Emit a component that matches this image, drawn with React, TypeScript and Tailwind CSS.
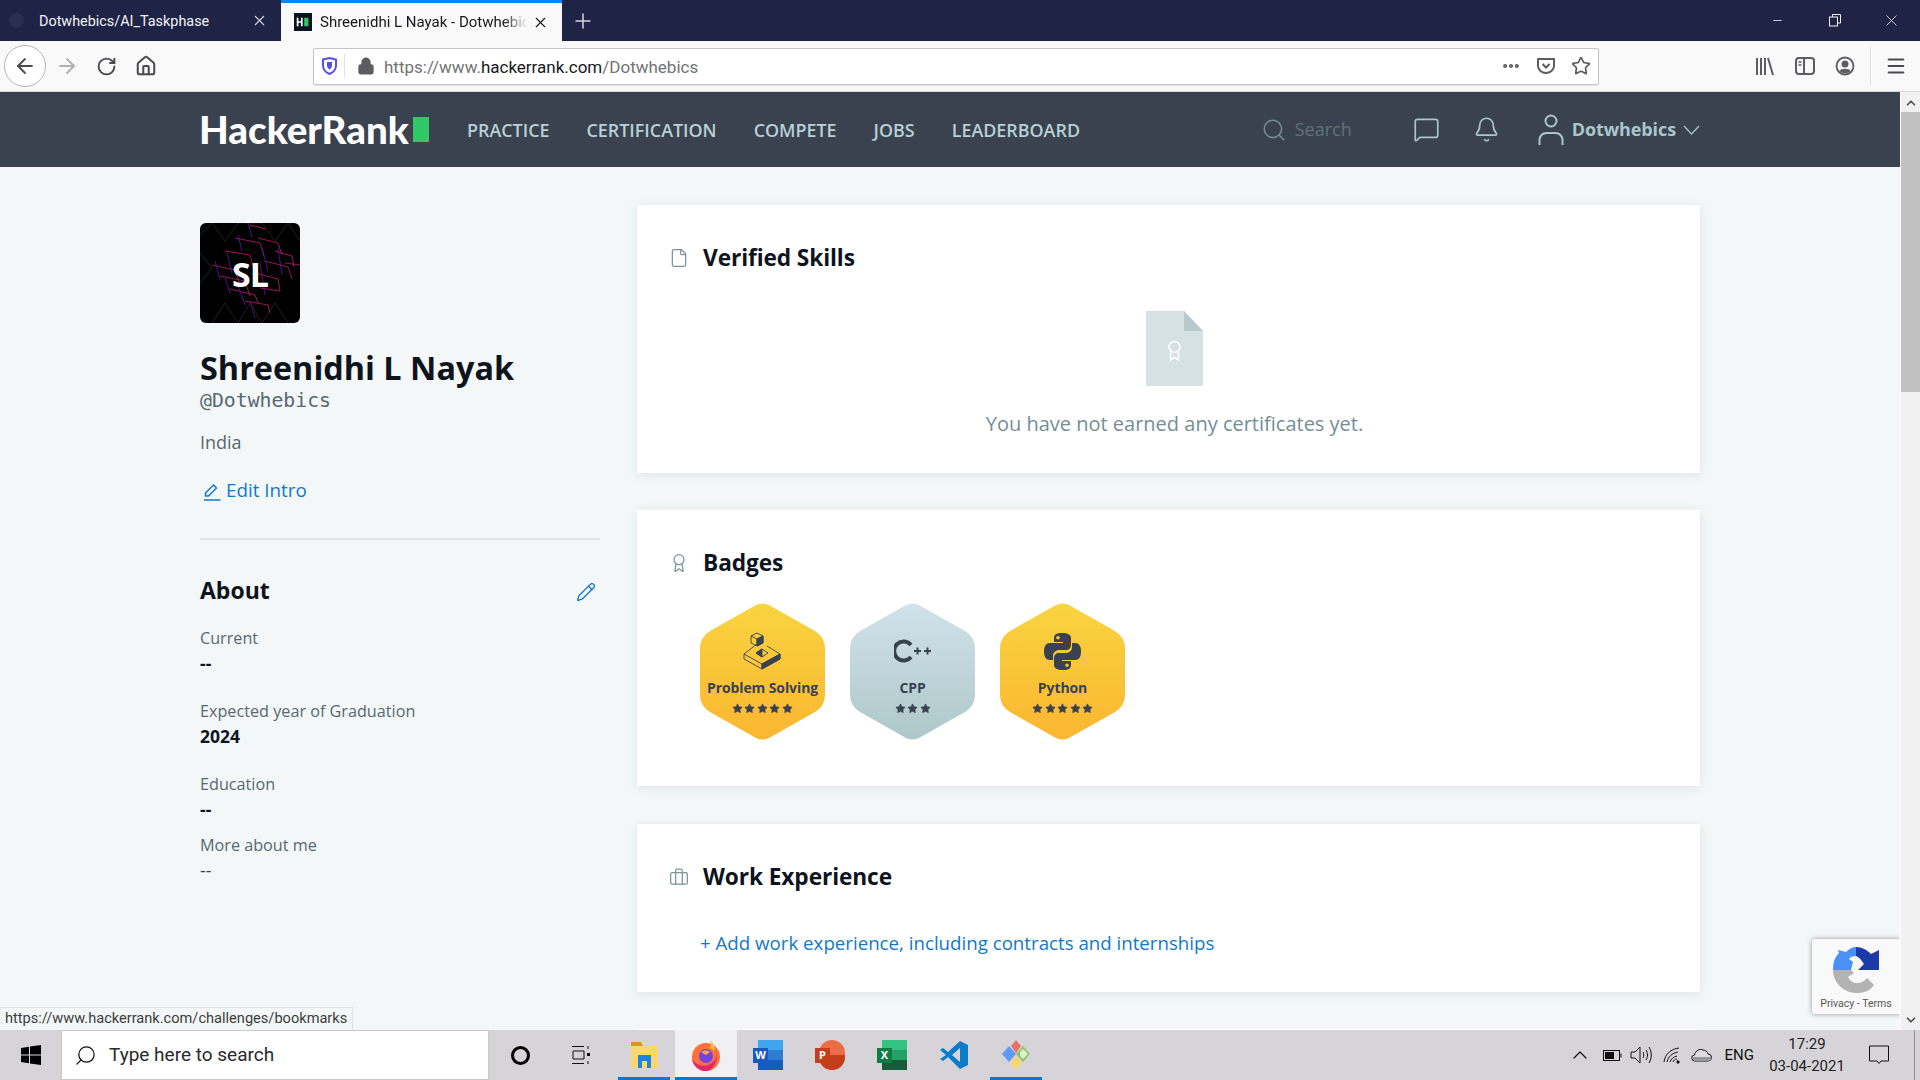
import { ReactNode } from "react";
import { RotateCw, Home, ArrowLeft, ArrowRight, Lock, X, Plus, Star, MoreHorizontal, Search, Bell, ChevronDown, ChevronUp, Menu, Pencil, File, Award, Briefcase, MessageSquare, Minus } from "lucide-react";

const SITE = "font-['Open_Sans',sans-serif]";

function HrMark({ size = 18 }: { size?: number }) {
    return (
        <svg width={size} height={size} viewBox="0 0 15 15" className="shrink-0">
            <rect width="15" height="15" fill="#0e141e" />
            <path d="M3 4v7M6.500 4v7M3 7.500h3.500" stroke="#fff" strokeWidth="1.400" />
            <rect x="8.500" y="4" width="3.500" height="7" fill="#2ec866" />
        </svg>
    );
}

function BrowserTabs() {
    return (
        <div className="h-[41px] bg-[#1f2447] flex font-['Roboto',sans-serif] text-[14.400px] shrink-0">
            <div className="w-[281px] flex items-center pl-[9px] pr-[13px] text-[#f3f3f5] shrink-0">
                <svg width="15" height="15" viewBox="0 0 16 16" className="mr-[15px] shrink-0" fill="#2a2f52">
                    <circle cx="8" cy="8" r="8" />
                </svg>
                <span className="whitespace-nowrap mt-[2px]">Dotwhebics/AI_Taskphase</span>
                <X size={17} strokeWidth={1.500} className="ml-auto text-[#d5d6de] shrink-0" />
            </div>
            <div className="w-[281px] bg-[#f9f9fa] border-t-[3px] border-[#0a84ff] flex items-center pl-[13px] pr-[13px] text-[#18181a] shrink-0">
                <HrMark />
                <span className="ml-[8px] w-[208px] overflow-hidden whitespace-nowrap text-[15px] [mask-image:linear-gradient(to_right,black_88%,transparent)]">Shreenidhi L Nayak - Dotwhebics</span>
                <X size={17} strokeWidth={1.500} className="ml-auto shrink-0" />
            </div>
            <div className="w-[42px] flex items-center justify-center text-[#d5d6de] shrink-0">
                <Plus size={24} strokeWidth={1.500} />
            </div>
            <div className="ml-auto flex items-center text-[#eef0f5] shrink-0">
                <div className="w-[57px] flex justify-center"><Minus size={13} strokeWidth={1.500} /></div>
                <div className="w-[57px] flex justify-center">
                    <svg width="12" height="13" viewBox="0 0 12 13" fill="none" stroke="currentColor">
                        <path d="M3.500 3V.5h8V9H9" /><rect x=".5" y="3" width="8" height="9" />
                    </svg>
                </div>
                <div className="w-[57px] flex justify-center"><X size={19} strokeWidth={1} /></div>
            </div>
        </div>
    );
}

function BrowserToolbar() {
    return (
        <div className="h-[51px] bg-[#f9f9fa] border-b border-[#d6d6d7] flex items-center shrink-0 text-[#4a4a4f]">
            <div className="ml-[4px] w-[42px] h-[42px] rounded-full border border-[#b4b4b4] bg-white flex items-center justify-center shrink-0">
                <ArrowLeft size={24} strokeWidth={1.800} />
            </div>
            <ArrowRight size={24} strokeWidth={1.800} className="ml-[9px] text-[#b1b1b3] shrink-0" />
            <RotateCw size={21} strokeWidth={2.200} className="ml-[17px] shrink-0" />
            <Home size={22} strokeWidth={2.200} className="ml-[18px] shrink-0" />
            <div className="ml-[156px] w-[1286px] h-[37px] bg-white border border-[#c4c4c4] rounded-[2px] flex items-center shrink-0 shadow-[0_1px_1px_rgba(0,0,0,0.08)]">
                <svg width="15" height="18" viewBox="0 0 15 18" className="ml-[8px] shrink-0">
                    <path d="M1 2.500 7.500 1 14 2.500v6c0 4-3 7-6.500 8.500C4 15.500 1 12.500 1 8.500z" fill="#fff" stroke="#5b4fe0" strokeWidth="2" />
                    <path d="M5 5h5v3.500c0 2-1.200 3.200-2.500 4C6.200 11.700 5 10.500 5 8.500z" fill="#5b4fe0" />
                </svg>
                <div className="w-px h-[24px] bg-[#e2e2e3] ml-[7px]" />
                <Lock size={18} strokeWidth={2.400} fill="#5c5c61" className="ml-[12px] text-[#5c5c61] shrink-0" />
                <span className="ml-[9px] mt-[3px] font-['Roboto',sans-serif] text-[17px] text-[#737373] whitespace-nowrap">
                    https://www.<span className="text-[#18181a]">hackerrank.com</span>/Dotwhebics
                </span>
                <MoreHorizontal size={20} strokeWidth={3} className="ml-auto text-[#5c5c61]" />
                <svg width="20" height="20" viewBox="0 0 20 20" fill="none" stroke="#5c5c61" strokeWidth="2" className="ml-[15px]">
                    <path d="M2 3h16v7c0 4-4 7-8 7s-8-3-8-7z" strokeLinejoin="round" /><path d="m6.500 8 3.500 3.500L13.500 8" />
                </svg>
                <Star size={20} strokeWidth={2} className="ml-[15px] mr-[7px] text-[#5c5c61]" />
            </div>
            <div className="ml-auto flex items-center shrink-0">
                <svg width="20" height="20" viewBox="0 0 20 20" fill="none" stroke="#5c5c61" strokeWidth="2"><path d="M2 2v17M6 2v17M10 2v17M13 2l5 17" /></svg>
                <svg width="20" height="20" viewBox="0 0 20 20" fill="none" stroke="#5c5c61" strokeWidth="2" className="ml-[20px]"><rect x="1" y="2" width="18" height="16" rx="3" /><path d="M9 2v16" /><path d="M3.500 6h3M3.500 9h3" strokeWidth="1.400" /></svg>
                <svg width="20" height="20" viewBox="0 0 20 20" className="ml-[20px]"><circle cx="10" cy="10" r="8.500" fill="none" stroke="#5c5c61" strokeWidth="1.800" /><circle cx="10" cy="8" r="3.500" fill="#5c5c61" /><path d="M4.500 15c1-3 10-3 11 0-3 3-8 3-11 0z" fill="#5c5c61" /></svg>
                <div className="w-px h-[38px] bg-[#e0e0e1] ml-[15px]" />
                <Menu size={22} strokeWidth={2.200} className="ml-[14px] mr-[13px]" />
            </div>
        </div>
    );
}

function SiteNav() {
    const links = ["PRACTICE", "CERTIFICATION", "COMPETE", "JOBS", "LEADERBOARD"];
    return (
        <div className={`h-[75px] bg-[#39424e] pl-[200px] pr-[200px] flex items-center shrink-0 ${SITE}`}>
            <div className="flex items-center font-['Lato',sans-serif] text-[38.500px] font-black text-white w-[230px] shrink-0 -ml-[1px]">
                HackerRank
                <span className="w-[18px] h-[25px] bg-[#2ec866] ml-[4px]" />
            </div>
            <div className="flex items-center ml-[38px] gap-[37px] text-[#b8d0d6] text-[17.900px] font-semibold mt-[1px]">
                {links.map((link) => (
                    <span key={link}>{link}</span>
                ))}
            </div>
            <div className="ml-auto flex items-center text-[#a9c6cd]">
                <Search size={26} strokeWidth={1.400} className="text-[#738f93]" />
                <span className="ml-[8px] text-[18px] text-[#5f7277] w-[118px]">Search</span>
                <MessageSquare size={27} strokeWidth={1.500} />
                <Bell size={27} strokeWidth={1.500} className="ml-[33px]" />
                <svg width="26" height="32" viewBox="0 0 26 32" fill="none" stroke="currentColor" strokeWidth="2" className="ml-[38px]">
                    <circle cx="13" cy="7" r="5.500" />
                    <path d="M1.500 31v-5c0-4 3-7 7-7h9c4 0 7 3 7 7v5" />
                </svg>
                <span className="ml-[8px] text-[18px] font-bold tracking-[-0.1px]">Dotwhebics</span>
                <svg width="17" height="10" viewBox="0 0 17 10" fill="none" stroke="currentColor" strokeWidth="1.200" className="ml-[7px]">
                    <path d="M1 1l7.500 8L16 1" />
                </svg>
            </div>
        </div>
    );
}

function AboutRow({ label, value, bold = true, className = "" }: { label: string; value: string; bold?: boolean; className?: string }) {
    return (
        <div className={className}>
            <div className="text-[16.200px] leading-[24px] text-[#576871]">{label}</div>
            <div className={`text-[17.500px] leading-[24px] mt-[1px] ${bold ? "font-bold text-[#0e141e]" : "text-[#39424e]"}`}>{value}</div>
        </div>
    );
}

function Sidebar() {
    return (
        <div className={`w-[400px] shrink-0 pt-[56px] ${SITE}`}>
            <div className="w-[100px] h-[100px] rounded-[6px] bg-black relative overflow-hidden flex items-center justify-center">
                <svg width="100" height="100" viewBox="0 0 100 100" className="absolute inset-0" fill="none" strokeWidth="0.800">
                    <path d="M0 30 12 45 0 60M12 100 25 80 38 100 50 80 62 100 75 80 88 100M0 12 12 0 25 18 38 0 62 0 75 18 88 0 100 18" stroke="#2a2a2a" />
                    <path d="M35 15 60 20 64 33M25 28 50 32 54 47M12 42 35 47 40 62M50 2 66 6M58 15 78 20 82 32M75 28 92 33 94 44M65 38 88 44 92 56M85 40 100 42M20 53 45 58 50 73M55 50 78 56 80 68M30 66 55 72 58 80M60 65 80 68M45 78 68 82 70 90" stroke="#c01a70" />
                    <path d="M38 12 42 28M48 0 52 14M27 30 32 50M15 38 20 57M38 62 45 82M50 78 55 95M62 25 68 48M78 25 82 52M25 55 30 70M60 40 65 72" stroke="#5a1aa8" />
                </svg>
                <span className="relative text-white text-[34px] font-bold tracking-[-1px] mt-[3px]">SL</span>
            </div>
            <h1 className="mt-[22px] text-[32.400px] leading-[44px] font-bold text-[#0e141e]">Shreenidhi L Nayak</h1>
            <div className="font-['DejaVu_Sans_Mono',monospace] text-[19.800px] leading-[24px] text-[#576871]">@Dotwhebics</div>
            <div className="mt-[17px] text-[18px] leading-[24px] text-[#576871]">India</div>
            <div className="mt-[24px] ml-[4px] flex items-center text-[18.800px] leading-[24px] text-[#1279c6]">
                <svg width="17" height="18" viewBox="0 0 17 18" fill="none" stroke="currentColor" strokeWidth="1.500" className="mr-[5px] mt-[3px]">
                    <path d="M1.500 13v-3L9.500 2l3 3-8 8zM0 17h16.500" />
                </svg>
                Edit Intro
            </div>
            <div className="h-[2px] bg-[#dfe6e8] mt-[36px]" />
            <div className="mt-[34px] flex items-center justify-between pr-[4px]">
                <h2 className="text-[23px] leading-[32px] font-bold text-[#0e141e]">About</h2>
                <Pencil size={20} strokeWidth={1.600} className="text-[#1279c6] mt-[3px]" />
            </div>
            <AboutRow label="Current" value="--" className="mt-[20px]" />
            <AboutRow label="Expected year of Graduation" value="2024" className="mt-[24px]" />
            <AboutRow label="Education" value="--" className="mt-[24px]" />
            <AboutRow label="More about me" value="--" bold={false} className="mt-[12px]" />
        </div>
    );
}

function Card({ icon, title, className = "", children }: { icon: ReactNode; title: string; className?: string; children?: ReactNode }) {
    return (
        <div className={`bg-white shadow-[0_2px_10px_rgba(100,120,130,0.14)] pl-[32px] pt-[36px] shrink-0 ${className}`}>
            <div className="flex items-center h-[34px]">
                <span className="w-[20px] flex justify-center text-[#7b9497]">{icon}</span>
                <h2 className="ml-[14px] text-[22.700px] leading-[32px] -mt-[1px] font-bold text-[#0e141e] tracking-[-0.1px]">{title}</h2>
            </div>
            {children}
        </div>
    );
}

function Hexagon({ id, from, to, children }: { id: string; from: string; to: string; children: ReactNode }) {
    return (
        <div className="relative w-[125px] h-[137px] flex flex-col items-center justify-end pb-[26px]">
            <svg width="125" height="137" viewBox="0 0 125 137" className="absolute inset-0">
                <defs>
                    <linearGradient id={id} x1="0" y1="0" x2="0" y2="1">
                        <stop offset="0" stopColor={from} />
                        <stop offset="1" stopColor={to} />
                    </linearGradient>
                </defs>
                <path d="M56 2q6.500-3 13 0l46 26q10 6 10 17v47q0 11-10 17l-46 26q-6.500 3-13 0l-46-26Q0 103 0 92V45q0-11 10-17z" fill={`url(#${id})`} />
            </svg>
            <div className="relative flex flex-col items-center text-[#39424e]">
                {children}
            </div>
        </div>
    );
}

function Stars({ count }: { count: number }) {
    return (
        <div className="flex gap-[1.500px] mt-[5px]">
            {Array.from({ length: count }).map((_, i) => (
                <Star key={i} size={11} fill="#39424e" strokeWidth={1} />
            ))}
        </div>
    );
}

function BadgeLabel({ name, stars }: { name: string; stars: number }) {
    return (
        <>
            <div className={`text-[14px] leading-[20px] font-bold whitespace-nowrap tracking-[-0.1px] ${SITE}`}>{name}</div>
            <Stars count={stars} />
        </>
    );
}

function Badges() {
    return (
        <div className="flex gap-[25px] ml-[31px] mt-[23px]">
            <Hexagon id="gold1" from="#f8d440" to="#fbb631">
                <svg width="38" height="38" viewBox="0 0 38 38" fill="none" stroke="#39424e" strokeWidth="0.900" className="mb-[8px]">
                    <path d="M14 1l6 3v7l-6 3-6-3V4z" />
                    <path d="M8 4l6 3 6-3M14 7v7" />
                    <path d="M14 7l6-3v7l-6 3z" fill="#39424e" />
                    <path d="M14 12 1 22l18 10 18-10-13-8" />
                    <path d="M1 22v5l18 10 18-10v-5M19 32v5" />
                    <path d="M19 32l18-10v5L19 37z" fill="#39424e" />
                    <path d="M19 17l6 4-6 4-6-4z" />
                    <path d="M19 17v8l-6-4z" fill="#39424e" />
                </svg>
                <BadgeLabel name="Problem Solving" stars={5} />
            </Hexagon>
            <Hexagon id="silver" from="#d1e2ea" to="#aec8c9">
                <svg width="38" height="24" viewBox="0 0 38 24" className="mb-[15px]" fill="none" stroke="#39424e">
                    <path d="M17 6A9.500 9.500 0 1 0 17 18" strokeWidth="4" />
                    <path d="M20 12h7M23.500 8.500v7M30 12h7M33.500 8.500v7" strokeWidth="2" />
                </svg>
                <BadgeLabel name="CPP" stars={3} />
            </Hexagon>
            <Hexagon id="gold2" from="#f8d440" to="#fbb631">
                <svg width="37" height="37" viewBox="0 0 37 37" className="mb-[8px]" fill="#39424e">
                    <path d="M18 0c-6 0-8 2-8 5v4h9v1H6c-4 0-6 3-6 8.500S2 27 6 27h3v-4.500c0-3 3-5.500 6-5.500h7c3 0 5-2 5-5V5c0-3-3-5-9-5zm-4 3a1.800 1.800 0 1 1 0 3.600A1.800 1.800 0 0 1 14 3z" />
                    <path d="M19 37c6 0 8-2 8-5v-4h-9v-1h13c4 0 6-3 6-8.500S35 10 31 10h-3v4.500c0 3-3 5.500-6 5.500h-7c-3 0-5 2-5 5v7c0 3 3 5 9 5zm4-3a1.800 1.800 0 1 1 0-3.600 1.800 1.800 0 0 1 0 3.600z" />
                </svg>
                <BadgeLabel name="Python" stars={5} />
            </Hexagon>
        </div>
    );
}

function Cards() {
    return (
        <div className={`w-[1063px] shrink-0 pt-[38px] flex flex-col gap-[37px] ${SITE}`}>
            <Card icon={<File size={26} strokeWidth={1.500} />} title="Verified Skills" className="h-[268px]">
                <div className="flex flex-col items-center -ml-[20px] mt-[36px]">
                    <svg width="57" height="75" viewBox="0 0 57 75">
                        <path d="M0 0h38l19 20v55H0z" fill="#d5e1e2" />
                        <path d="M38 0l19 20H38z" fill="#b8c9ce" />
                        <circle cx="28.500" cy="36" r="5.500" fill="none" stroke="#fff" strokeWidth="1.500" />
                        <path d="M24.500 41v8l4-2.500 4 2.500v-8" fill="none" stroke="#fff" strokeWidth="1.500" />
                    </svg>
                    <p className="mt-[24px] text-[20px] leading-[28px] text-[#738f93]">You have not earned any certificates yet.</p>
                </div>
            </Card>
            <Card icon={<Award size={26} strokeWidth={1.500} />} title="Badges" className="h-[276px] mb-[1px]">
                <Badges />
            </Card>
            <Card icon={<Briefcase size={25} strokeWidth={1.500} />} title="Work Experience" className="h-[168px]">
                <p className="ml-[31px] mt-[35px] text-[18.700px] leading-[28px] text-[#1279c6]">+ Add work experience, including contracts and internships</p>
            </Card>
            <div className="h-[40px] bg-white shrink-0" />
        </div>
    );
}

function Recaptcha() {
    return (
        <div className="absolute right-0 bottom-[16px] w-[88px] h-[75px] bg-[#f9f9f9] rounded-l-[3px] shadow-[0_0_5px_rgba(0,0,0,0.4)] flex flex-col items-center pt-[8px]">
            <svg width="46" height="46" viewBox="0 0 46 46">
                <path d="M23 0v9c-3 0-6 1-7 3l4 3-2 8H0C0 15 2 10 6 6l-1-3 8 2c3-3 6-5 10-5z" fill="#4a90f5" />
                <path d="M23 0c6 0 11 3 15 7l8-4v20H25l6-6-3-4c-1-2-3-3-5-4z" fill="#1c3aa9" />
                <path d="M0 23h18l3 3-6 4c2 4 5 6 9 6 4 0 8-2 10-5l7 7c-4 6-10 8-17 8C11 46 0 36 0 23z" fill="#b3b3b3" />
            </svg>
            <div className="font-['Roboto',sans-serif] text-[10.500px] text-[#555] mt-[3px] whitespace-nowrap">Privacy - Terms</div>
        </div>
    );
}

function StatusTip() {
    return (
        <div className="absolute left-0 bottom-0 h-[23px] bg-[#f3f7f7] border border-[#e0e3e4] border-l-0 border-b-0 pl-[5px] pr-[5px] flex items-center font-['Roboto',sans-serif] text-[14.600px] text-[#3d3d3d] whitespace-nowrap">
            https://www.hackerrank.com/challenges/bookmarks
        </div>
    );
}

function Scrollbar() {
    return (
        <div className="w-[20px] bg-[#f1f1f1] border-l border-white flex flex-col items-center shrink-0">
            <ChevronUp size={14} strokeWidth={3} className="text-[#505050] mt-[4px] mb-[2px] shrink-0" />
            <div className="w-full h-[280px] bg-[#c1c1c1]" />
            <ChevronDown size={14} strokeWidth={3} className="text-[#505050] mt-auto mb-[3px] shrink-0" />
        </div>
    );
}

function TaskApp({ active, open, children }: { active?: boolean; open?: boolean; children: ReactNode }) {
    return (
        <div className={`relative w-[62px] h-[50px] flex items-center justify-center ${active ? "bg-[#f0eff1]" : ""}`}>
            {children}
            {open && <span className="absolute bottom-0 left-[5px] right-[5px] h-[3px] bg-[#0078d7]" />}
            {active && <span className="absolute bottom-0 left-0 right-0 h-[3px] bg-[#0078d7]" />}
        </div>
    );
}

function OfficeIcon({ front, light, mid, dark, letter }: { front: string; light: string; mid: string; dark: string; letter: string }) {
    return (
        <div className="relative w-[30px] h-[30px] flex flex-col">
            <div className="ml-[5px] flex-1" style={{ background: light }} />
            <div className="ml-[5px] flex-1" style={{ background: mid }} />
            <div className="ml-[5px] flex-1" style={{ background: dark }} />
            <div className="absolute left-0 top-[8px] w-[15px] h-[15px] text-white text-[11px] font-bold flex items-center justify-center" style={{ background: front }}>{letter}</div>
        </div>
    );
}

function Taskbar() {
    return (
        <div className="h-[50px] bg-[#d7d4d9] flex items-center shrink-0 text-[#111]">
            <div className="w-[61px] flex justify-center shrink-0">
                <svg width="20" height="20" viewBox="0 0 20 20" fill="#000"><path d="M0 3l8-1.200V9.500H0zM9 1.600 20 0v9.500H9zM0 10.500h8v7.700L0 17zM9 10.500h11V20L9 18.400z" /></svg>
            </div>
            <div className="w-[428px] h-[50px] bg-white border border-[#c9c9c9] flex items-center shrink-0">
                <Search size={23} strokeWidth={1.300} className="ml-[12px] -scale-x-100 shrink-0" />
                <span className="ml-[12px] font-['Roboto',sans-serif] text-[19px] text-[#2a2a2a]">Type here to search</span>
            </div>
            <div className="w-[62px] flex justify-center shrink-0">
                <div className="w-[19px] h-[19px] rounded-full border-[3px] border-black" />
            </div>
            <div className="w-[62px] flex justify-center shrink-0">
                <svg width="20" height="20" viewBox="0 0 20 20" fill="none" stroke="#111"><path d="M0 1.500h12M0 18.500h12M1 6h11v8H1zM16 1v3M16 16v3" /><rect x="15" y="8" width="3" height="3" fill="#111" stroke="none" /></svg>
            </div>
            <TaskApp open>
                <svg width="30" height="30" viewBox="0 0 30 30">
                    <path d="M2 2h10l2 4H2z" fill="#d99a17" /><rect x="2" y="6" width="27" height="22" fill="#fcd770" /><path d="M9 28V15h13v13h-4v-7h-5v7z" fill="#1a86d4" />
                </svg>
            </TaskApp>
            <TaskApp active>
                <svg width="32" height="32" viewBox="0 0 32 32">
                    <circle cx="16" cy="18" r="14" fill="#ff7139" /><path d="M16 32a14 14 0 0 1-14-12c5 8 16 9 22 2 4-5 3-11 1-15 5 9 0 25-9 25z" fill="#e3276f" /><path d="M20 1c2 4 1 6 0 8l5 3c0-4-2-9-5-11z" fill="#ffbd4f" />
                    <circle cx="16" cy="17" r="7" fill="#7542e5" /><path d="M11 13c3-2 7-2 9 0l-4 3z" fill="#ffa436" />
                </svg>
            </TaskApp>
            <TaskApp><OfficeIcon front="#185abd" light="#41a5ee" mid="#2b7cd3" dark="#185abd" letter="W" /></TaskApp>
            <TaskApp>
                <div className="relative w-[30px] h-[30px]">
                    <div className="absolute inset-y-0 right-0 w-[26px] rounded-full bg-[#ed6c47]" />
                    <div className="absolute left-[4px] right-0 bottom-0 h-[15px] rounded-b-full bg-[#c43e1c]" />
                    <div className="absolute left-0 top-[8px] w-[15px] h-[15px] bg-[#c43e1c] text-white text-[11px] font-bold flex items-center justify-center">P</div>
                </div>
            </TaskApp>
            <TaskApp><OfficeIcon front="#107c41" light="#33c481" mid="#21a366" dark="#185c37" letter="X" /></TaskApp>
            <TaskApp>
                <svg width="30" height="30" viewBox="0 0 30 30">
                    <path d="M21 1l8 4v20l-8 4L9 17l-5 4-3-2 6-4-6-5 3-2 5 4z" fill="#0a7cc9" /><path d="M21 8v14l-8-7z" fill="#d7d4d9" />
                </svg>
            </TaskApp>
            <TaskApp open>
                <svg width="32" height="32" viewBox="0 0 32 32">
                    <path d="M9 7 2 15l7 8 7-8z" fill="#5f9bf0" /><path d="M16 1l-5 6 5 7 5-7z" fill="#e57368" /><path d="M23 7l-7 8 7 8 7-8z" fill="#8fc662" /><path d="M16 17l-6 7 6 7 6-7z" fill="#f7d774" /><path d="M20 13l3-3 5 5-5 5-3-3z" fill="#fff" opacity=".7" />
                </svg>
            </TaskApp>
            <div className="ml-auto flex items-center shrink-0">
                <ChevronUp size={24} strokeWidth={1.200} />
                <svg width="19" height="11" viewBox="0 0 19 11" fill="none" stroke="#111" className="ml-[11px]"><rect x=".5" y=".5" width="16" height="10" /><rect x="2" y="2" width="9" height="7" fill="#111" stroke="none" /><path d="M18 3.500v4" /></svg>
                <svg width="22" height="18" viewBox="0 0 22 18" fill="none" stroke="#111" className="ml-[8px]"><path d="M1 6h4l5-5v16l-5-5H1zM13 6c1 2 1 4 0 6M16 4c2 3 2 7 0 10M19 1c3 5 3 11 0 16" /></svg>
                <svg width="18" height="18" viewBox="0 0 18 18" fill="none" stroke="#111" className="ml-[11px]"><path d="M1 16C2 8 8 3 16 2M4 16c1-5 5-9 11-10M7 16c1-3 3-5 7-6M10 16c0-1 2-3 4-3" /><circle cx="15" cy="16" r="1.200" fill="#111" /></svg>
                <svg width="21" height="14" viewBox="0 0 21 14" className="ml-[10px]"><path d="M4 13a3 3 0 0 1-.5-6C4 3 9 0 12 2c2 0 5 2 5 4a3.500 3.500 0 0 1 0 7z" fill="#ddd" stroke="#111" /><path d="M1 9h19v3l-2 1H3z" fill="#999" /></svg>
                <span className="ml-[13px] font-['Roboto',sans-serif] text-[15px]">ENG</span>
                <div className="ml-[13px] w-[80px] flex flex-col items-center font-['Roboto',sans-serif] text-[15px] leading-[22px] text-[#1f1f1f]">
                    <span>17:29</span>
                    <span className="whitespace-nowrap">03-04-2021</span>
                </div>
                <svg width="20" height="20" viewBox="0 0 20 20" fill="none" stroke="#111" className="ml-[22px] mr-[25px]"><path d="M.5 1h19v15H12l-2 2.500L8 16H.5z" /></svg>
                <div className="w-px h-[50px] bg-[#8f8d92] mr-[5px]" />
            </div>
        </div>
    );
}

export default function App() {
    return (
        <div className="h-screen w-full flex flex-col overflow-hidden">
            <BrowserTabs />
            <BrowserToolbar />
            <div className="flex-1 flex min-h-0">
                <div className="relative flex-1 min-w-0 bg-[#f3f7f7] flex flex-col overflow-hidden">
                    <SiteNav />
                    <div className="flex gap-[37px] pl-[200px]">
                        <Sidebar />
                        <Cards />
                    </div>
                    <Recaptcha />
                    <StatusTip />
                </div>
                <Scrollbar />
            </div>
            <Taskbar />
        </div>
    );
}
